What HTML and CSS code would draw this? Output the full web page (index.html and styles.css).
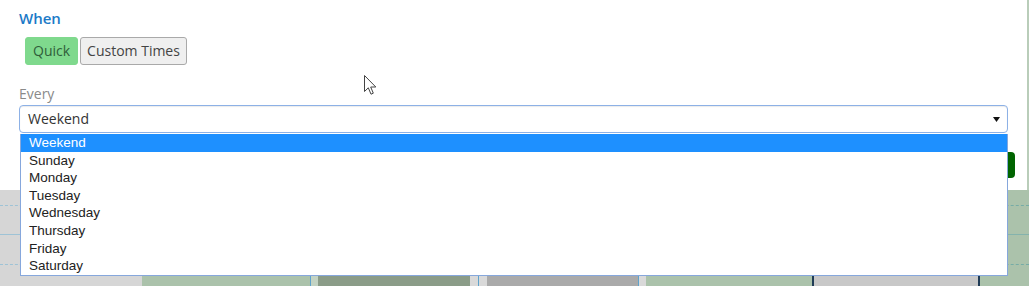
FILE: index.html
```html
<!DOCTYPE html>
<html>
<head>
<meta charset="utf-8">
<link rel="stylesheet" href="styles.css">
</head>
<body>
<div class="page">
  <div class="modal">
    <h3 class="heading">When</h3>
    <div class="toggle">
      <button class="tbtn active">Quick</button>
      <button class="tbtn">Custom Times</button>
    </div>
    <div class="label">Every</div>
    <div class="select">
      <span class="select-text">Weekend</span>
      <svg class="caret" width="7" height="5" viewBox="0 0 7 5"><path d="M0 0 L7 0 L3.5 5 Z" fill="#111"/></svg>
    </div>
    <div class="footer">
      <button class="save"></button>
    </div>
    <ul class="options">
      <li class="opt sel">Weekend</li>
      <li class="opt">Sunday</li>
      <li class="opt">Monday</li>
      <li class="opt">Tuesday</li>
      <li class="opt">Wednesday</li>
      <li class="opt">Thursday</li>
      <li class="opt">Friday</li>
      <li class="opt">Saturday</li>
    </ul>
    <svg class="cursor" width="13" height="21" viewBox="0 0 13 21"><path d="M0.5 0.5 L0.5 16.5 L4.3 12.8 L7 19.2 L9.3 18.2 L6.7 12 L11.8 12 Z" fill="#fff" stroke="#444" stroke-width="1"/></svg>
  </div>
  <div class="calendar">
    <div class="col c-grey w142"><div class="s1"></div><div class="s2"></div><div class="s3"></div></div>
    <div class="col c-green w168"><div class="s1"></div><div class="s2"></div><div class="s3"></div></div>
    <div class="col c-pale sep w8"></div>
    <div class="col c-dkgreen w152"></div>
    <div class="col c-light w8"></div>
    <div class="col c-light sep w9"></div>
    <div class="col c-grey2 w151"></div>
    <div class="col c-light sep w8"></div>
    <div class="col c-green w168 dark"></div>
    <div class="col c-lgrey w166 dark"></div>
    <div class="col c-green grow"><div class="s1 g"></div><div class="s2 g"></div><div class="s3 g"></div></div>
  </div>
</div>
</body>
</html>
```

FILE: styles.css
```css
html, body {
  margin: 0;
  padding: 0;
  background: #fff;
}
.page {
  width: 1029px;
  height: 286px;
  overflow: hidden;
  position: relative;
  font-family: "Open Sans", "Liberation Sans", sans-serif;
}
.modal {
  position: relative;
  height: 190px;
  box-sizing: border-box;
  padding: 8px 12px 0 19px;
  background: #fff;
  border-right: 2px solid #b9cdb9;
  z-index: 2;
}
.heading {
  margin: 0;
  font-size: 15px;
  font-weight: 600;
  line-height: 20px;
  color: #1b7ac7;
}
.toggle {
  display: flex;
  gap: 2px;
  margin: 9px 0 0 6px;
}
.tbtn {
  height: 28px;
  box-sizing: border-box;
  margin: 0;
  padding: 0 6px;
  font-family: "Open Sans", sans-serif;
  font-size: 14px;
  line-height: 26px;
  color: #444;
  background: #efefef;
  border: 1px solid #a9a9a9;
  border-radius: 3px;
}
.tbtn.active {
  padding: 0 7px;
  background: #7fd98d;
  border-color: #7fd98d;
  color: #2f5e3a;
}
.label {
  margin-top: 20px;
  font-size: 14px;
  line-height: 18px;
  color: #8a8a8a;
}
.select {
  margin-top: 2px;
  width: 989px;
  height: 28px;
  box-sizing: border-box;
  border: 1px solid #8db1e6;
  border-radius: 4px;
  box-shadow: inset 0 1px 1px rgba(0,0,0,0.08);
  display: flex;
  align-items: center;
  justify-content: space-between;
  padding: 0 7px 0 8px;
}
.select-text {
  font-size: 14px;
  line-height: 26px;
  color: #333;
}
.caret {
  display: block;
  margin-top: 1px;
}
.footer {
  display: flex;
  justify-content: flex-end;
  margin-top: 19px;
}
.save {
  width: 80px;
  height: 26px;
  background: #006400;
  border: none;
  border-radius: 4px;
}
.options {
  position: absolute;
  left: 20px;
  top: 134px;
  width: 988px;
  margin: 0;
  padding: 0;
  list-style: none;
  box-sizing: border-box;
  border: 1px solid #86a7dc;
  border-top: none;
  background: #fff;
  z-index: 3;
}
.opt {
  height: 17.6px;
  line-height: 17.6px;
  padding-left: 8px;
  font-family: "Liberation Sans", Arial, sans-serif;
  font-size: 13.5px;
  color: #222;
}
.opt.sel {
  background: #1e90ff;
  color: #fff;
}
.cursor {
  position: absolute;
  left: 364px;
  top: 75px;
  z-index: 4;
}
.calendar {
  display: flex;
  height: 96px;
}
.col {
  height: 100%;
  box-sizing: border-box;
}
.s1 { height: 15px; border-bottom: 1px dashed #9ec3d6; }
.s2 { height: 28px; border-bottom: 1px solid #9ec3d6; }
.s3 { height: 29px; border-bottom: 1px dashed #9ec3d6; }
.s1.g, .s3.g { border-bottom-color: #76aca6; }
.s2.g { border-bottom-color: #84b3ad; }
.c-grey { background: #d6d6d6; }
.c-green { background: #abc2ab; }
.c-pale { background: #c3d3c3; }
.c-dkgreen { background: #8b9c88; }
.c-light { background: #d9d9d9; }
.c-grey2 { background: #aaaaaa; }
.c-lgrey { background: #c8c8c8; }
.sep { border-left: 1px solid #5fa3cc; }
.dark { border-right: 2px solid #1f3b56; }
.w8 { width: 8px; }
.w9 { width: 9px; }
.w142 { width: 142px; }
.w151 { width: 151px; }
.w152 { width: 152px; }
.w166 { width: 166px; }
.w168 { width: 168px; }
.grow { flex: 1; }
```
